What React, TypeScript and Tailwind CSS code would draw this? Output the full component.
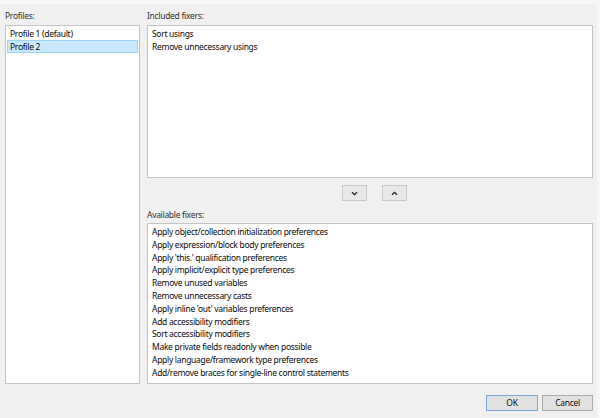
const PROFILES = ['Profile 1 (default)', 'Profile 2'];

const INCLUDED = ['Sort usings', 'Remove unnecessary usings'];

const AVAILABLE = [
  'Apply object/collection initialization preferences',
  'Apply expression/block body preferences',
  "Apply 'this.' qualification preferences",
  'Apply implicit/explicit type preferences',
  'Remove unused variables',
  'Remove unnecessary casts',
  "Apply inline 'out' variables preferences",
  'Add accessibility modifiers',
  'Sort accessibility modifiers',
  'Make private fields readonly when possible',
  'Apply language/framework type preferences',
  'Add/remove braces for single-line control statements',
];

function Row({ text, selected }: { text: string; selected?: boolean }) {
  return (
    <div
      className={
        selected
          ? 'h-[13px] px-[2px] leading-[11px] border border-[#99d1ff] bg-[#cce8ff] whitespace-nowrap'
          : 'h-[12.8px] px-[2px] leading-[11px] border border-transparent whitespace-nowrap'
      }
    >
      {text}
    </div>
  );
}

function Chevron({ up }: { up?: boolean }) {
  return (
    <svg width="7" height="5" viewBox="0 0 7 5" className={up ? 'rotate-180' : ''}>
      <path d="M1 1.2 L3.5 3.6 L6 1.2" fill="none" stroke="#222" strokeWidth="1.3" />
    </svg>
  );
}

export default function App() {
  return (
    <div
      className="w-[600px] h-[418px] bg-[#f0f0f0] border-t-[4px] border-r-[3px] border-[#f7f7f7] text-[8.5px] tracking-[-0.3px] text-[#0a0a0a] flex flex-col overflow-hidden"
      style={{ fontFamily: '"Noto Sans", "Liberation Sans", sans-serif' }}
    >
      <div className="flex pt-[6px] pl-[5px] pr-[4px] h-[380px]">
        <div className="w-[135px] flex flex-col">
          <div className="h-[12px] leading-[12px] mb-[3px] text-[#333]">Profiles:</div>
          <div className="flex-1 bg-white border border-[#c4c4c4] p-[1px]">
            {PROFILES.map((p, i) => (
              <Row key={p} text={p} selected={i === 1} />
            ))}
          </div>
        </div>

        <div className="ml-[7px] flex-1 flex flex-col">
          <div className="h-[12px] leading-[12px] mb-[3px] text-[#333]">Included fixers:</div>
          <div className="h-[153px] bg-white border border-[#c4c4c4] p-[1px]">
            {INCLUDED.map((t) => (
              <Row key={t} text={t} />
            ))}
          </div>

          <div className="mt-[7px] flex justify-center gap-[15px] pl-[9px]">
            <button className="w-[25px] h-[16px] bg-[#e8e8e8] border border-[#c8c8c8] flex items-center justify-center">
              <Chevron />
            </button>
            <button className="w-[25px] h-[16px] bg-[#e8e8e8] border border-[#c8c8c8] flex items-center justify-center">
              <Chevron up />
            </button>
          </div>

          <div className="h-[12px] leading-[12px] mt-[8px] mb-[2px] text-[#333]">Available fixers:</div>
          <div className="flex-1 bg-white border border-[#c4c4c4] p-[1px]">
            {AVAILABLE.map((t) => (
              <Row key={t} text={t} />
            ))}
          </div>
        </div>
      </div>

      <div className="flex justify-end gap-[4px] mt-[11px] pr-[4px]">
        <button className="w-[52px] h-[16px] bg-[#e1e1e1] border border-[#7aa7dc] leading-[14px] text-[#111]">OK</button>
        <button className="w-[51px] h-[16px] bg-[#e1e1e1] border border-[#adadad] leading-[14px] text-[#111]">Cancel</button>
      </div>
    </div>
  );
}
